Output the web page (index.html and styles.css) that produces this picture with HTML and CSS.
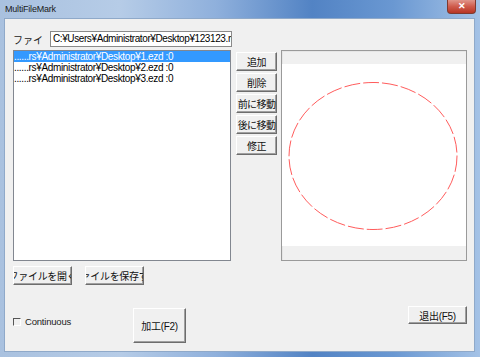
FILE: index.html
```html
<!DOCTYPE html>
<html>
<head>
  <meta charset="UTF-8">
  <title>MultiFileMark</title>
  <link rel="stylesheet" href="styles.css">
</head>
<body>
  <div class="window">
    <div class="titlebar">
      <span class="title">MultiFileMark</span>
      <span class="close">✕</span>
    </div>

    <div class="client">
      <div class="file-row">
        <span class="file-label">ファイ</span>
        <div class="file-input">C:¥Users¥Administrator¥Desktop¥123123.mark</div>
      </div>

      <div class="main">
        <ul class="file-list">
          <li class="selected">......rs¥Administrator¥Desktop¥1.ezd :0</li>
          <li>......rs¥Administrator¥Desktop¥2.ezd :0</li>
          <li>......rs¥Administrator¥Desktop¥3.ezd :0</li>
        </ul>

        <div class="side-buttons">
          <div class="btn"><span>追加</span></div>
          <div class="btn"><span>削除</span></div>
          <div class="btn"><span>前に移動</span></div>
          <div class="btn"><span>後に移動</span></div>
          <div class="btn"><span>修正</span></div>
        </div>

        <div class="preview">
          <div class="preview-canvas">
            <svg width="184" height="182" viewBox="0 0 184 182">
              <ellipse cx="91" cy="92" rx="84" ry="73.5" fill="none" stroke="#ff5c5c" stroke-width="1" stroke-dasharray="16 3"/>
            </svg>
          </div>
        </div>
      </div>

      <div class="io-row">
        <div class="btn io-btn"><span>ファイルを開く</span></div>
        <div class="btn io-btn"><span>ファイルを保存する</span></div>
      </div>

      <div class="action-row">
        <label class="check"><span class="check-box"></span>Continuous</label>
        <div class="btn run-btn"><span>加工(F2)</span></div>
        <div class="btn exit-btn"><span>退出(F5)</span></div>
      </div>
    </div>
  </div>
</body>
</html>
```

FILE: styles.css
```css
body {
  margin: 0;
  font-family: 'Liberation Sans', 'Noto Sans CJK JP', sans-serif;
  color: #000;
}

.window {
  width: 480px;
  height: 357px;
  box-sizing: border-box;
  padding: 0 5px 5px 4px;
  display: flex;
  flex-direction: column;
  background: linear-gradient(90deg, #a9c1df 0%, #b6cce7 25%, #8fb0dc 45%, #5283c4 65%, #6a98d2 82%, #a4c2e6 100%);
}

.titlebar {
  height: 18px;
  position: relative;
  display: flex;
  align-items: center;
}

.title {
  font-size: 9px;
  margin-left: 1px;
  color: #1a1a1a;
  letter-spacing: -0.2px;
}

.close {
  position: absolute;
  top: 0;
  right: -1px;
  width: 27px;
  height: 13px;
  border-radius: 0 0 4px 4px;
  background: linear-gradient(180deg, #e0958a 0%, #cf5b4c 50%, #b83524 100%);
  border: 1px solid #7e3a30;
  border-top: none;
  color: #fff;
  font-size: 9px;
  font-weight: bold;
  text-align: center;
  line-height: 12px;
}

.client {
  flex: 1;
  background: #f0f0f0;
  border: 1px solid #8fa9c9;
  padding: 12px 7px 0 8px;
  display: flex;
  flex-direction: column;
}

.file-row {
  display: flex;
  align-items: center;
  height: 16px;
}

.file-label {
  width: 37px;
  font-size: 10px;
  font-family: 'Noto Sans CJK JP', sans-serif;
  color: #222;
}

.file-input {
  width: 178px;
  height: 14px;
  background: #fff;
  border: 1px solid #8a8a8a;
  font-size: 10px;
  letter-spacing: -0.4px;
  line-height: 14px;
  padding-left: 2px;
  white-space: nowrap;
  overflow: hidden;
}

.main {
  display: flex;
  margin-top: 3px;
  height: 211px;
}

.file-list {
  list-style: none;
  margin: 0;
  padding: 0;
  width: 218px;
  box-sizing: border-box;
  background: #fff;
  border: 1px solid #828790;
  font-size: 10px;
  letter-spacing: -0.35px;
}

.file-list li {
  height: 11px;
  line-height: 11px;
  white-space: nowrap;
}

.file-list li.selected {
  background: #3399ff;
  color: #fff;
}

.side-buttons {
  width: 41px;
  margin: 2px 0 0 5px;
  display: flex;
  flex-direction: column;
  gap: 2px;
}

.btn {
  box-sizing: border-box;
  display: flex;
  align-items: center;
  justify-content: center;
  overflow: hidden;
  white-space: nowrap;
  background: #f0f0f0;
  border-top: 1px solid #fff;
  border-left: 1px solid #fff;
  border-right: 1px solid #6d6d6d;
  border-bottom: 1px solid #6d6d6d;
  box-shadow: inset -1px -1px 0 #a0a0a0;
  font-family: 'Liberation Sans', 'Noto Sans CJK JP', sans-serif;
  font-size: 10px;
  letter-spacing: -0.3px;
  color: #111;
}

.btn span {
  flex-shrink: 0;
}

.side-buttons .btn {
  height: 19px;
  letter-spacing: -0.6px;
}

.preview {
  width: 186px;
  margin-left: 4px;
  box-sizing: border-box;
  border: 1px solid #9a9a9a;
  box-shadow: inset 1px 1px 0 #e6e6e6;
  background: #f0f0f0;
}

.preview-canvas {
  margin-top: 13px;
  height: 182px;
  background: #fff;
}

.preview-canvas svg {
  display: block;
}

.io-row {
  display: flex;
  gap: 13px;
  margin-top: 5px;
}

.io-btn {
  width: 59px;
  height: 19px;
}

.action-row {
  display: flex;
  align-items: flex-start;
  margin-top: 21px;
}

.check {
  width: 120px;
  margin-top: 10px;
  display: flex;
  align-items: center;
  font-size: 9.5px;
  letter-spacing: -0.2px;
  color: #222;
}

.check-box {
  width: 6px;
  height: 6px;
  margin-right: 4px;
  border-top: 1px solid #555;
  border-left: 1px solid #555;
  border-right: 1px solid #fff;
  border-bottom: 1px solid #fff;
}

.run-btn {
  width: 53px;
  height: 35px;
  margin-top: 2px;
}

.exit-btn {
  width: 59px;
  height: 18px;
  margin-left: auto;
}
```
